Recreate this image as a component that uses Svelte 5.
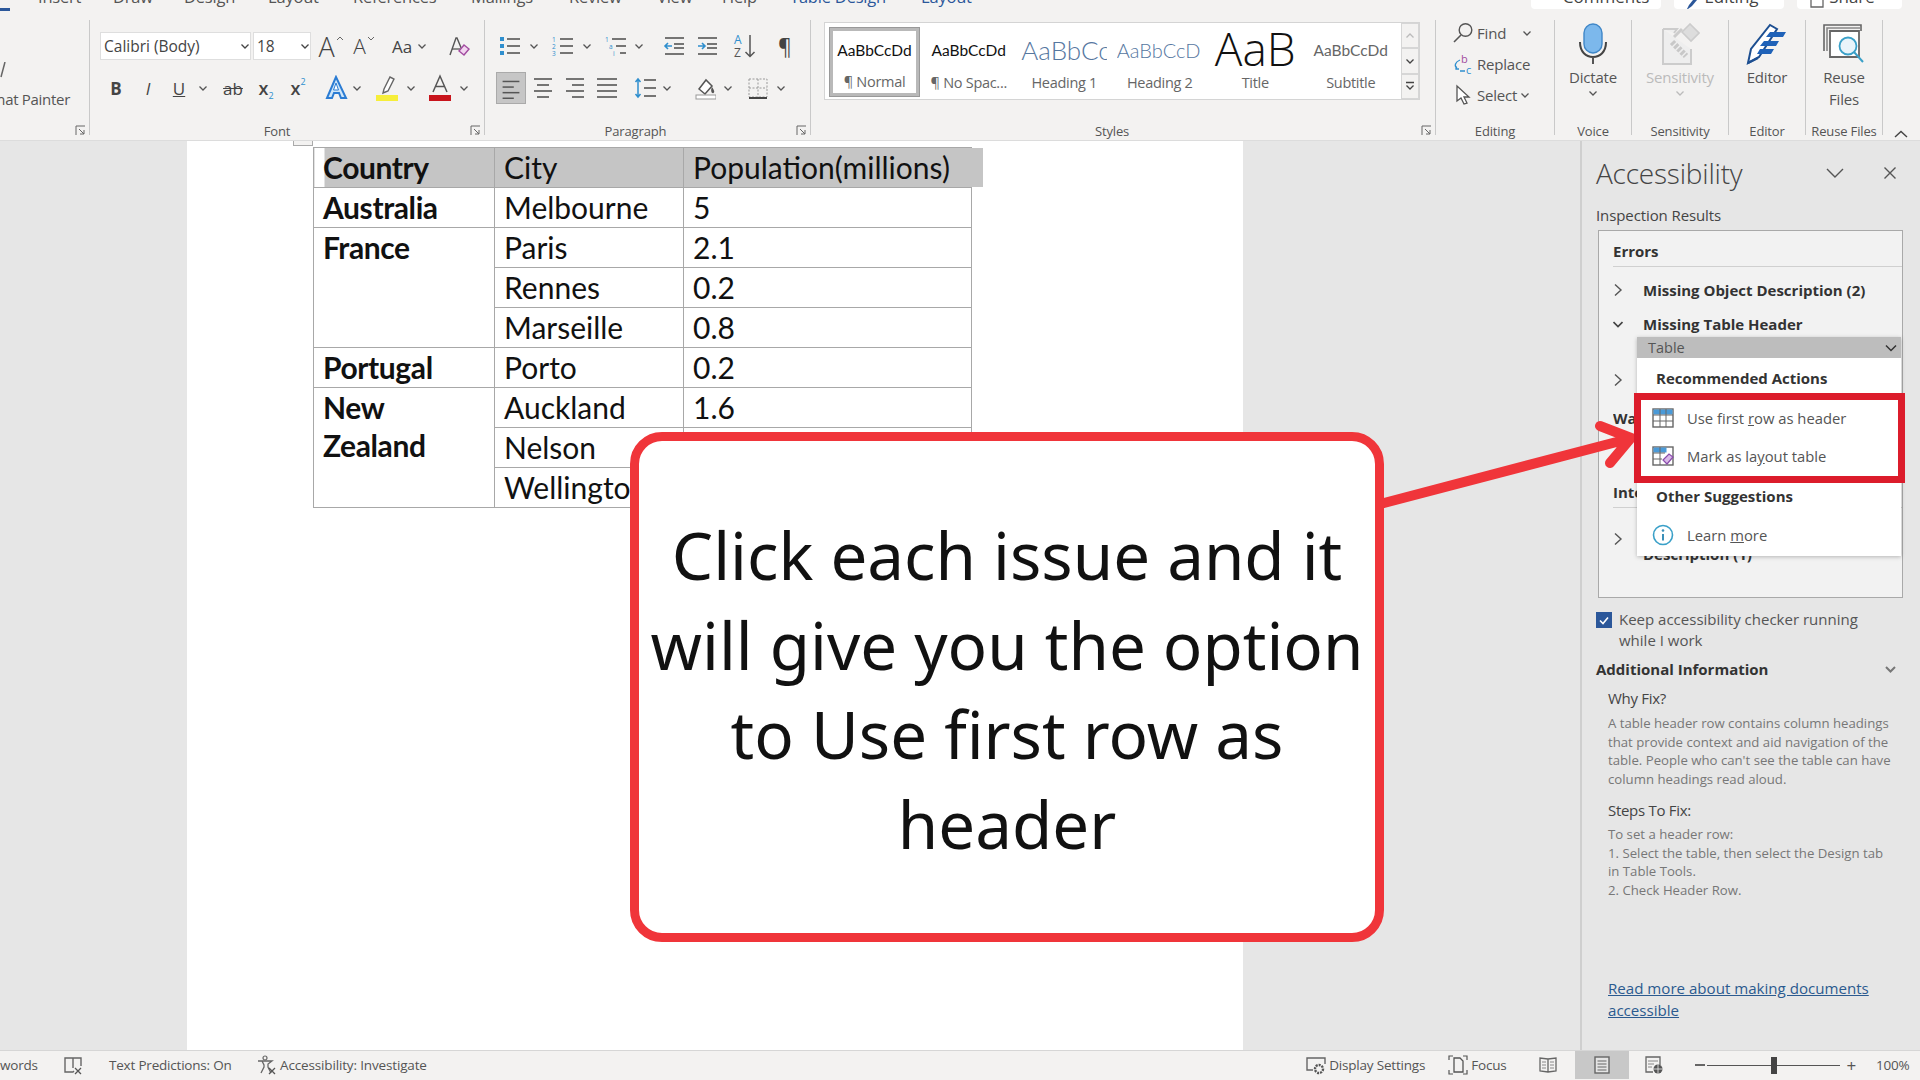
<script>
  const lines = (ys, x1, x2, c='#555', sw=1.6) => ys.map(y=>`<path d="M${x1} ${y}H${x2}" stroke="${c}" stroke-width="${sw}" fill="none"/>`).join('');
  const chev = {w:10,h:10,vb:'0 0 10 10',svg:'<path d="M1.5 3.5L5 7l3.5-3.5" fill="none" stroke="#555" stroke-width="1.3"/>'};
  const ch = c => ({...chev,c});
  const place = (items,start) => { let x=start; return items.map(it=>{ const w=it.w??22; const ml=it.c-w/2-x; x=it.c+w/2; return {...it,w,ml}; }); };

  const fontRow1 = place([
    {c:331,w:30,h:28,t:'A',cls:'big',car:'M1 4l3-3 3 3'},
    {c:364,w:28,h:28,t:'A',cls:'mid',car:'M1 1l3 3 3-3'},
    {c:402,w:24,h:28,t:'Aa',cls:'aa'},
    ch(422),
    {c:459,w:24,h:24,svg:'<path d="M3 21L9 4h1l5 12" fill="none" stroke="#555" stroke-width="1.4"/><path d="M5 15h8" stroke="#555" stroke-width="1.3"/><path d="M12 17l5-6 5 4-5 6z" fill="#f2d5f0" stroke="#a24ca0" stroke-width="1.4"/>'}
  ],311);

  const fontRow2 = place([
    {c:116,w:16,h:24,t:'B',cls:'b'},
    {c:148,w:14,h:24,t:'I',cls:'it'},
    {c:179,w:18,h:24,t:'U',cls:'u'},
    ch(203),
    {c:233,w:24,h:24,t:'ab',cls:'st'},
    {c:266,w:24,h:24,t:'x',cls:'sub',sb:'2'},
    {c:298,w:24,h:24,t:'x',cls:'sup',sp:'2'},
    {c:336,w:24,h:26,svg:'<path d="M12 2L3 23h5l2-5h5l2 5h5z" fill="#cfe6f8" stroke="#2b7cd3" stroke-width="2"/><path d="M12 8l-2.5 7h5z" fill="#fff" stroke="#2b7cd3" stroke-width="1"/>'},
    ch(357),
    {c:387,w:26,h:28,svg:'<path d="M10 15L16 3l4 2-6 12-5 2z" fill="#fff" stroke="#666" stroke-width="1.4"/><rect x="2" y="21" width="22" height="6" fill="#f6ee3a"/>'},
    ch(411),
    {c:440,w:26,h:28,svg:'<path d="M6 18L13 2l7 16M8.5 12.5h9" fill="none" stroke="#555" stroke-width="1.5"/><rect x="2" y="21" width="22" height="6" fill="#c8141c"/>'},
    ch(464)
  ],90);

  const L = (ys,x1=9,x2=22)=>lines(ys,x1,x2,'#555',1.6);
  const paraRow1 = place([
    {c:509,svg:'<rect x="2" y="3" width="4" height="4" fill="#2f8fce"/><rect x="2" y="10" width="4" height="4" fill="#2f8fce"/><rect x="2" y="17" width="4" height="4" fill="#2f8fce"/>'+L([5,12,19])},
    ch(534),
    {c:562,svg:'<text x="1" y="8" font-size="6.5" fill="#2f8fce" font-family="Open Sans">1</text><text x="1" y="15" font-size="6.5" fill="#2f8fce" font-family="Open Sans">2</text><text x="1" y="22" font-size="6.5" fill="#2f8fce" font-family="Open Sans">3</text>'+L([5,12,19])},
    ch(587),
    {c:615,svg:'<text x="1" y="8" font-size="6.5" fill="#2f8fce" font-family="Open Sans">1</text><text x="5" y="15" font-size="6.5" fill="#2f8fce" font-family="Open Sans">a</text><text x="9" y="22" font-size="6.5" fill="#2f8fce" font-family="Open Sans">i</text>'+lines([5],8,22,'#555',1.6)+lines([12],12,22,'#555',1.6)+lines([19],16,22,'#555',1.6)},
    ch(639),
    {c:673,svg:lines([4,20],3,22,'#555',1.6)+lines([10,14],12,22,'#555',1.6)+'<path d="M10 12H3M6 9l-3 3 3 3" fill="none" stroke="#2f8fce" stroke-width="1.6"/>'},
    {c:706,svg:lines([4,20],3,22,'#555',1.6)+lines([10,14],12,22,'#555',1.6)+'<path d="M3 12h7M7 9l3 3-3 3" fill="none" stroke="#2f8fce" stroke-width="1.6"/>'},
    {c:745,w:24,h:26,svg:'<text x="1" y="11" font-size="12" fill="#2f8fce" font-family="Open Sans">A</text><text x="1" y="24" font-size="12" fill="#555" font-family="Open Sans">Z</text><path d="M17 2v21M12.5 19l4.5 4.5 4.5-4.5" fill="none" stroke="#555" stroke-width="1.5"/>'},
    {c:785,w:18,h:24,t:'¶',cls:'pil'}
  ],485);
  const paraRow2 = place([
    {c:511,w:30,h:32,cls:'on',svg:lines([5,17],3,21)+lines([11,23],3,15),vb:'-3 -4 30 32'},
    {c:542,svg:lines([3,15],3,21)+lines([9,21],6,18)},
    {c:574,svg:lines([3,15],3,21)+lines([9,21],9,21)},
    {c:606,svg:lines([3,9,15,21],2,22)},
    {c:645,svg:lines([4,12,20],10,23)+'<path d="M4 3v18M1.5 6L4 3l2.5 3M1.5 18L4 21l2.5-3" fill="none" stroke="#2f8fce" stroke-width="1.5"/>'},
    ch(667),
    {c:705,svg:'<path d="M5 13l7-9 6 6-7 8z" fill="#fff" stroke="#555" stroke-width="1.5"/><path d="M18 11c2 3 3 5 1.5 6S16 15 18 11z" fill="#555"/><rect x="2" y="19" width="20" height="4" fill="#fff" stroke="#999"/>'},
    ch(728),
    {c:757,svg:'<path d="M3 3h18v18H3z" fill="none" stroke="#999" stroke-dasharray="2 1.5"/><path d="M12 3v18M3 12h18" fill="none" stroke="#999" stroke-dasharray="2 1.5"/><path d="M3 22h18" stroke="#444" stroke-width="2"/>'},
    ch(781)
  ],485);

  const styles = [
    {t:'AaBbCcDd',l:'¶ Normal',cls:'n',sel:true},
    {t:'AaBbCcDd',l:'¶ No Spac...',cls:'n'},
    {t:'AaBbCc',l:'Heading 1',cls:'h1'},
    {t:'AaBbCcD',l:'Heading 2',cls:'h2'},
    {t:'AaB',l:'Title',cls:'ti'},
    {t:'AaBbCcDd',l:'Subtitle',cls:'su'}
  ];
  const tabs = [['Insert',38],['Draw',113],['Design',184],['Layout',268],['References',353],['Mailings',471],['Review',569],['View',657],['Help',722],['Table Design',790,1],['Layout',921,1]];
</script>

<div class="app">
  <div class="tabs">
    <span class="home"></span>
    {#each tabs as t}
      <span class="tab" class:ctx={t[2]} style="margin-left:{t[1]}px">{t[0]}</span>
    {/each}
    <div class="tbtns">
      <span class="tbtn w130"><span class="tbl">Comments</span></span>
      <span class="tbtn w110"><svg width="14" height="9" viewBox="0 0 14 9"><path d="M2 9l2-4 4-5h4l-5 6-4 3z" fill="#2b579a"/></svg><span class="tbl">Editing</span></span>
      <span class="tbtn w105"><svg width="14" height="9" viewBox="0 0 14 9"><path d="M1 0v7h12V0" fill="none" stroke="#666" stroke-width="1.3"/></svg><span class="tbl">Share</span></span>
    </div>
  </div>

  <div class="ribbon">
    <div class="g clip">
      <svg class="brush" width="6" height="16" viewBox="0 0 6 16"><path d="M5 0L1 15" stroke="#666" stroke-width="1.5"/></svg>
      <div class="painter">Format Painter</div>
      <div class="lbl"></div>
      <span class="launch"><svg width="11" height="11" viewBox="0 0 11 11"><path d="M1 10V1h9M4 4l5 5M9 5v4H5" fill="none" stroke="#666"/></svg></span>
    </div>

    <div class="g font">
      <div class="rows">
        <div class="row r1">
          <div class="combo fam">Calibri (Body)<svg width="10" height="10" viewBox="0 0 10 10"><path d="M1.5 3.5L5 7l3.5-3.5" fill="none" stroke="#444" stroke-width="1.3"/></svg></div>
          <div class="combo size">18<svg width="10" height="10" viewBox="0 0 10 10"><path d="M1.5 3.5L5 7l3.5-3.5" fill="none" stroke="#444" stroke-width="1.3"/></svg></div>
          {#each fontRow1 as it}{@render slot(it)}{/each}
        </div>
        <div class="row r2">{#each fontRow2 as it}{@render slot(it)}{/each}</div>
      </div>
      <div class="lbl">Font</div>
      <span class="launch"><svg width="11" height="11" viewBox="0 0 11 11"><path d="M1 10V1h9M4 4l5 5M9 5v4H5" fill="none" stroke="#666"/></svg></span>
    </div>

    <div class="g para">
      <div class="rows">
        <div class="row r1">{#each paraRow1 as it}{@render slot(it)}{/each}</div>
        <div class="row r2">{#each paraRow2 as it}{@render slot(it)}{/each}</div>
      </div>
      <div class="lbl">Paragraph</div>
      <span class="launch"><svg width="11" height="11" viewBox="0 0 11 11"><path d="M1 10V1h9M4 4l5 5M9 5v4H5" fill="none" stroke="#666"/></svg></span>
    </div>

    <div class="g sty">
      <div class="gallery">
        <div class="items">
          {#each styles as st}
            <div class="st-item" class:sel={st.sel}>
              <div class="prev {st.cls}">{st.t}</div>
              <div class="stl">{st.l}</div>
            </div>
          {/each}
        </div>
        <div class="scroll">
          <span class="sb"><svg width="10" height="10" viewBox="0 0 10 10"><path d="M1.5 6.5L5 3l3.5 3.5" fill="none" stroke="#bbb" stroke-width="1.3"/></svg></span>
          <span class="sb"><svg width="10" height="10" viewBox="0 0 10 10"><path d="M1.5 3.5L5 7l3.5-3.5" fill="none" stroke="#444" stroke-width="1.3"/></svg></span>
          <span class="sb"><svg width="10" height="10" viewBox="0 0 10 10"><path d="M1 1.5h8M1.5 4.5L5 8l3.5-3.5" fill="none" stroke="#444" stroke-width="1.3"/></svg></span>
        </div>
      </div>
      <div class="lbl">Styles</div>
      <span class="launch"><svg width="11" height="11" viewBox="0 0 11 11"><path d="M1 10V1h9M4 4l5 5M9 5v4H5" fill="none" stroke="#666"/></svg></span>
    </div>

    <div class="g edit">
      <div class="elist">
        <div class="erow"><svg class="eic" width="22" height="22" viewBox="0 0 22 22"><circle cx="13.5" cy="8" r="6.3" fill="none" stroke="#555" stroke-width="1.4"/><path d="M9 13L2 20" stroke="#555" stroke-width="1.6"/></svg><span>Find</span><svg class="ech" width="10" height="10" viewBox="0 0 10 10"><path d="M1.5 3.5L5 7l3.5-3.5" fill="none" stroke="#555" stroke-width="1.3"/></svg></div>
        <div class="erow"><svg class="eic" width="22" height="22" viewBox="0 0 22 22"><text x="9" y="10" font-size="11" fill="#a24ca0" font-family="Open Sans">b</text><text x="14" y="21" font-size="11" fill="#2f8fce" font-family="Open Sans">c</text><path d="M8 7C3 9 2 13 5 15M4 13v3h3M8 18h5" fill="none" stroke="#2f8fce" stroke-width="1.3"/></svg><span>Replace</span></div>
        <div class="erow"><svg class="eic" width="22" height="22" viewBox="0 0 22 22"><path d="M5 2v15l4-3 3 6 3-1-3-6h5z" fill="#fff" stroke="#555" stroke-width="1.3"/></svg><span>Select</span><svg class="ech sel" width="10" height="10" viewBox="0 0 10 10"><path d="M1.5 3.5L5 7l3.5-3.5" fill="none" stroke="#555" stroke-width="1.3"/></svg></div>
      </div>
      <div class="lbl">Editing</div>
    </div>

    <div class="g voice">
      <div class="bigbtn">
        <svg width="30" height="42" viewBox="0 0 30 42"><rect x="6" y="1" width="18" height="29" rx="9" fill="#7cb8ec" stroke="#3f87c8" stroke-width="1.4"/><path d="M2 19c0 10 6 15 13 15s13-5 13-15" fill="none" stroke="#444" stroke-width="2"/><path d="M15 34v7" stroke="#555" stroke-width="2"/></svg>
        <div class="bt">Dictate</div>
        <svg class="bch" width="10" height="10" viewBox="0 0 10 10"><path d="M1.5 3.5L5 7l3.5-3.5" fill="none" stroke="#555" stroke-width="1.3"/></svg>
      </div>
      <div class="lbl">Voice</div>
    </div>

    <div class="g sens">
      <div class="bigbtn dim">
        <svg width="40" height="42" viewBox="0 0 40 42"><path d="M3 6h14l-3 4M31 26v15H3V6" fill="#eee" stroke="#ccc" stroke-width="2"/><path d="M12 19l14 14" stroke="#c8c8c8" stroke-width="6" stroke-dasharray="3 1.5"/><path d="M22 9l8-8 9 9-8 8z" fill="#ddd" stroke="#ccc" stroke-width="1.6"/><path d="M14 14l8-8" stroke="#ccc" stroke-width="3"/></svg>
        <div class="bt">Sensitivity</div>
        <svg class="bch" width="10" height="10" viewBox="0 0 10 10"><path d="M1.5 3.5L5 7l3.5-3.5" fill="none" stroke="#bbb" stroke-width="1.3"/></svg>
      </div>
      <div class="lbl">Sensitivity</div>
    </div>

    <div class="g ed">
      <div class="bigbtn">
        <svg width="42" height="42" viewBox="0 0 42 42"><path d="M2 40l3-14L24 2l7 4L13 34z" fill="#fff" stroke="#1d4f91" stroke-width="2"/><path d="M24 9h16l-3 5H20zM18 18h15l-3 5H14zM11 31h14l3-5H14z" fill="#1f62b8"/><path d="M2 40l10-5" stroke="#1d4f91" stroke-width="2"/></svg>
        <div class="bt">Editor</div>
      </div>
      <div class="lbl">Editor</div>
    </div>

    <div class="g reuse">
      <div class="bigbtn">
        <svg width="42" height="42" viewBox="0 0 42 42"><path d="M1 28V2h37v6" fill="none" stroke="#666" stroke-width="1.6"/><path d="M4 28V5h34" fill="none" stroke="#888" stroke-width="1.6"/><path d="M7 8h29v26H7z" fill="#fff" stroke="#666" stroke-width="1.8"/><circle cx="25" cy="23" r="8.5" fill="#e9f4fa" stroke="#3aa0c8" stroke-width="1.8"/><path d="M31 29l9 10" stroke="#3aa0c8" stroke-width="2"/></svg>
        <div class="bt">Reuse<br>Files</div>
      </div>
      <div class="lbl">Reuse Files</div>
    </div>

    <div class="collapse"><svg width="14" height="9" viewBox="0 0 14 9"><path d="M1 7l6-5.5L13 7" fill="none" stroke="#444" stroke-width="1.4"/></svg></div>
  </div>

  <div class="work">
    <div class="canvas">
      <div class="page">
        <span class="handle"></span>
        <table>
          <colgroup><col class="c1"><col class="c2"><col class="c3"></colgroup>
          <tbody>
            <tr class="hd"><th>Country</th><td>City</td><td>Population(millions)</td></tr>
            <tr><th>Australia</th><td>Melbourne</td><td>5</td></tr>
            <tr><th rowspan="3">France</th><td>Paris</td><td>2.1</td></tr>
            <tr><td>Rennes</td><td>0.2</td></tr>
            <tr><td>Marseille</td><td>0.8</td></tr>
            <tr><th>Portugal</th><td>Porto</td><td>0.2</td></tr>
            <tr><th rowspan="3" class="nz">New<br>Zealand</th><td>Auckland</td><td>1.6</td></tr>
            <tr><td>Nelson</td><td>0.1</td></tr>
            <tr><td>Wellington</td><td>0.2</td></tr>
          </tbody>
        </table>
        <span class="rowext"></span>
      </div>
    </div>

    <aside class="pane">
      <div class="phead">
        <span class="ptitle">Accessibility</span>
        <svg class="pch" width="20" height="12" viewBox="0 0 20 12"><path d="M2 2l8 8 8-8" fill="none" stroke="#555" stroke-width="1.4"/></svg>
        <svg class="px" width="14" height="14" viewBox="0 0 14 14"><path d="M1.5 1.5l11 11M12.5 1.5l-11 11" fill="none" stroke="#555" stroke-width="1.4"/></svg>
      </div>
      <div class="insp">Inspection Results</div>
      <div class="box">
        <div class="sec first">Errors</div>
        <div class="rule"></div>
        <div class="item a1">{@render gt()}<span>Missing Object Description (2)</span></div>
        <div class="item">{@render dn()}<span>Missing Table Header</span></div>
        <div class="item a2">{@render gt()}<span>Hidden</span></div>
        <div class="sec wa">Warnings</div>
        <div class="sec intl">Intelligent Services</div>
        <div class="rule"></div>
        <div class="item two a3">{@render gt()}<span>Missing Alternative Text<br>Description (1)</span></div>

        <div class="fly">
          <div class="tbar"><span>Table</span><svg width="12" height="8" viewBox="0 0 12 8"><path d="M1 1.5l5 5 5-5" fill="none" stroke="#333" stroke-width="1.5"/></svg></div>
          <div class="fh rec">Recommended Actions</div>
          <div class="fr"><svg width="22" height="20" viewBox="0 0 22 20"><rect x="1" y="1" width="20" height="18" fill="#fff" stroke="#666" stroke-width="1.4"/><rect x="1.5" y="1.5" width="19" height="5" fill="#4a9ad8"/><path d="M1 7h20M1 13h20M8 1v18M14 1v18" stroke="#666"/></svg><span>Use first <u>r</u>ow as header</span></div>
          <div class="fr"><svg width="22" height="20" viewBox="0 0 22 20"><rect x="1" y="1" width="20" height="18" fill="#fff" stroke="#666" stroke-width="1.4"/><rect x="1.5" y="1.5" width="13" height="5" fill="#4a9ad8"/><path d="M1 7h12M1 13h9M8 1v18" stroke="#666"/><path d="M11 14l6-6 4 3-6 7z" fill="#d9b8e8" stroke="#8a4cab" stroke-width="1.2"/></svg><span>Mark as la<u>y</u>out table</span></div>
          <div class="fh oth">Other Suggestions</div>
          <div class="fr lm"><svg width="22" height="22" viewBox="0 0 22 22"><circle cx="11" cy="11" r="9.5" fill="#fff" stroke="#3aa0c8" stroke-width="1.6"/><circle cx="11" cy="6.5" r="1.3" fill="#3a8fb8"/><path d="M11 10v6.5" stroke="#3a8fb8" stroke-width="2"/></svg><span>Learn <u>m</u>ore</span></div>
        </div>
      </div>

      <div class="chk">
        <span class="cb"><svg width="12" height="12" viewBox="0 0 12 12"><path d="M2 6.5l3 3 5-6" fill="none" stroke="#fff" stroke-width="1.6"/></svg></span>
        <span>Keep accessibility checker running<br>while I work</span>
      </div>
      <div class="addl"><span>Additional Information</span><svg width="11" height="7" viewBox="0 0 11 7"><path d="M1 1l4.5 4.5L10 1" fill="none" stroke="#777" stroke-width="2"/></svg></div>
      <div class="subh why">Why Fix?</div>
      <p class="txt t1">A table header row contains column headings<br>that provide context and aid navigation of the<br>table. People who can't see the table can have<br>column headings read aloud.</p>
      <div class="subh steps">Steps To Fix:</div>
      <p class="txt t2">To set a header row:<br>1. Select the table, then select the Design tab<br>in Table Tools.<br>2. Check Header Row.</p>
      <a class="more" href="#top">Read more about making documents<br>accessible</a>
    </aside>
  </div>

  <footer class="status">
    <span class="words">words</span>
    <svg class="bk" width="20" height="20" viewBox="0 0 20 20"><path d="M10 3v10M10 3H2v14h8l1-1M10 3h8v8" fill="none" stroke="#666" stroke-width="1.4"/><path d="M12 13l6 6M18 13l-6 6" stroke="#555" stroke-width="1.3"/></svg>
    <span class="tp">Text Predictions: On</span>
    <svg class="ac" width="20" height="20" viewBox="0 0 20 20"><circle cx="8" cy="3" r="2" fill="none" stroke="#666" stroke-width="1.2"/><path d="M1 6h14l-4 3v3l3 6M5 6l2 4v2l-3 6" fill="none" stroke="#666" stroke-width="1.3"/><path d="M12 13l6 6M18 13l-6 6" stroke="#555" stroke-width="1.3"/></svg>
    <span class="acct">Accessibility: Investigate</span>
    <span class="sp"></span>
    <svg class="ds" width="20" height="20" viewBox="0 0 20 20"><path d="M7 15H1V3h18v6" fill="none" stroke="#666" stroke-width="1.4"/><circle cx="13" cy="14" r="4" fill="none" stroke="#555" stroke-width="2.4" stroke-dasharray="2 1"/></svg>
    <span class="dst">Display Settings</span>
    <svg class="fo" width="20" height="20" viewBox="0 0 20 20"><path d="M1 5V1h4M15 1h4v4M19 15v4h-4M5 19H1v-4" fill="none" stroke="#555" stroke-width="1.2"/><path d="M6 3h6l3 3v11H6z" fill="none" stroke="#555" stroke-width="1.3"/></svg>
    <span class="fot">Focus</span>
    <svg class="rd" width="18" height="18" viewBox="0 0 18 18"><path d="M9 3L1 2v13l8 1 8-1V2zM9 3v13" fill="none" stroke="#666" stroke-width="1.3"/><path d="M3 6h4M3 9h4M3 12h4M11 6h4M11 9h4M11 12h4" stroke="#888"/></svg>
    <span class="pr"><svg width="16" height="18" viewBox="0 0 16 18"><rect x="1" y="1" width="14" height="16" fill="#e4e4e4" stroke="#666" stroke-width="1.4"/><path d="M3.5 5h9M3.5 8h9M3.5 11h9M3.5 14h9" stroke="#666"/></svg></span>
    <svg class="wb" width="18" height="18" viewBox="0 0 18 18"><path d="M8 16H1V1h14v8" fill="none" stroke="#666" stroke-width="1.3"/><path d="M3 5h10M3 8h6M3 11h4" stroke="#888"/><circle cx="13" cy="13" r="4.5" fill="#555"/><path d="M8.5 13h9M13 8.5v9" stroke="#eee" stroke-width=".8"/></svg>
    <span class="minus"></span>
    <span class="slider"><span class="thumb"></span></span>
    <span class="zp">+</span>
    <span class="pct">100%</span>
  </footer>

  <div class="callout">
    <p>Click each issue and it<br>will give you the option<br>to Use first row as<br>header</p>
  </div>
  <svg class="arrow" width="270" height="100" viewBox="1380 420 270 100">
    <path d="M1384 503L1628 439M1600 426L1631 438L1610 463" fill="none" stroke="#f0353a" stroke-width="10" stroke-linecap="round" stroke-linejoin="miter"/>
  </svg>
  <div class="redbox"></div>
</div>

{#snippet slot(it)}
  <span class="slot {it.cls ?? ''}" style="width:{it.w}px;height:{it.h ?? 24}px;margin-left:{it.ml}px">
    {#if it.t}
      {it.t}{#if it.sb}<sub>{it.sb}</sub>{/if}{#if it.sp}<sup>{it.sp}</sup>{/if}{#if it.car}<svg class="car" width="8" height="5" viewBox="0 0 8 5"><path d={it.car} fill="none" stroke="#666" stroke-width="1"/></svg>{/if}
    {:else}
      <svg width={it.w} height={it.h ?? 24} viewBox={it.vb ?? `0 0 ${it.w} ${it.h ?? 24}`}>{@html it.svg}</svg>
    {/if}
  </span>
{/snippet}
{#snippet gt()}<svg class="tw" width="10" height="14" viewBox="0 0 10 14"><path d="M2 1.5L8 7l-6 5.5" fill="none" stroke="#555" stroke-width="1.4"/></svg>{/snippet}
{#snippet dn()}<svg class="tw" width="10" height="14" viewBox="0 0 10 14"><path d="M0.5 5L5 9.5 9.5 5" fill="none" stroke="#444" stroke-width="1.7"/></svg>{/snippet}

<style>
  :global(body){margin:0;background:#e6e6e6;}
  .app{position:relative;width:1920px;height:1080px;overflow:hidden;display:flex;flex-direction:column;background:#e6e6e6;font-family:"Open Sans","Noto Sans",sans-serif;color:#444;}

  .tabs{position:relative;height:20px;background:#f3f2f1;display:flex;flex:none;}
  .tab{position:absolute;top:-13px;left:0;font-size:16.5px;line-height:20px;color:#555;white-space:nowrap;letter-spacing:-.2px;}
  .tab.ctx{color:#2b579a;}
  .home{position:absolute;left:0;top:8px;width:10px;height:3px;background:#2b579a;}
  .tbtns{position:absolute;left:1531px;top:0;display:flex;gap:13px;}
  .tbtn{height:9px;background:#fff;border-radius:0 0 4px 4px;font-size:17px;line-height:0;color:#444;overflow:hidden;display:flex;justify-content:center;align-items:flex-start;gap:11px;box-sizing:border-box;padding-left:20px;}
  .tbtn svg{margin-left:-14px;flex:none;}
  .tbl{display:block;margin-top:-3px;line-height:0;height:0;}
  .w130{width:130px;}.w110{width:110px;padding-left:0;gap:5px;}.w105{width:105px;padding-left:0;gap:5px;}

  .ribbon{height:121px;flex:none;display:flex;background:#f3f2f1;border-bottom:1px solid #dcdcdc;box-sizing:border-box;position:relative;}
  .g{position:relative;height:115px;box-sizing:border-box;border-right:1px solid #c9c9c9;display:flex;flex-direction:column;flex:none;}
  .clip{width:90px;}.font{width:395px;}.para{width:326px;}.sty{width:625px;}.edit{width:119px;}
  .voice{width:77px;}.sens{width:97px;}.reuse{width:77px;}.ed{width:77px;}
  .lbl{margin-top:auto;margin-bottom:-7px;height:22px;line-height:22px;text-align:center;font-size:13px;color:#555;letter-spacing:-.15px;white-space:nowrap;}
  .font .lbl{padding-right:20px;}
  .para .lbl{padding-right:24px;}
  .sty .lbl{padding-right:35px;}
  .launch{position:absolute;right:3px;bottom:-1px;width:11px;height:11px;display:flex;}
  .painter{position:absolute;right:19px;top:69px;font-size:15px;line-height:20px;white-space:nowrap;color:#555;letter-spacing:-.3px;}
  .brush{position:absolute;left:0;top:42px;}

  .rows{padding-top:12px;display:flex;flex-direction:column;}
  .row{display:flex;align-items:center;height:28px;}
  .r2{margin-top:12px;height:32px;}
  .font .r1{padding-left:10px;}
  .combo{height:28px;box-sizing:border-box;background:#fff;border:1px solid #dedede;font-size:15.5px;line-height:26px;padding-left:3px;display:flex;align-items:center;justify-content:space-between;padding-right:0;color:#444;flex:none;}
  .fam{width:151px;}.size{width:58px;margin-left:2px;}
  .slot{display:flex;align-items:center;justify-content:center;flex:none;color:#444;font-size:15px;position:relative;box-sizing:border-box;}
  .slot svg{display:block;}
  .slot .car{align-self:flex-start;margin:4px 0 0 1px;}
  .slot.big{font-size:27px;font-weight:300;}
  .slot.mid{font-size:21px;font-weight:300;}
  .slot.aa{font-size:17px;}
  .slot.b{font-weight:700;font-size:17px;}
  .slot.it{font-style:italic;font-size:17px;}
  .slot.u{text-decoration:underline;font-size:17px;}
  .slot.st{text-decoration:line-through;font-size:17px;}
  .slot.sub,.slot.sup{font-size:18px;font-weight:600;}
  .slot sub,.slot sup{font-size:9px;color:#2f8fce;line-height:1;font-weight:400;}
  .slot sub{margin-top:14px;}
  .slot sup{margin-top:-14px;}
  .slot.pil{font-size:21px;}
  .slot.on{background:#c6c6c6;border:1px solid #aaa;}

  .sty{padding:2px 0 0 13px;}
  .gallery{width:596px;height:78px;box-sizing:border-box;display:flex;background:#fff;border:1px solid #d4d4d4;}
  .items{display:flex;padding:4px 0 0 4px;flex:1;min-width:0;}
  .st-item{width:95.5px;height:70px;box-sizing:border-box;text-align:center;overflow:hidden;flex:none;display:flex;flex-direction:column;align-items:center;}
  .st-item.sel{border:4px solid #b9b9b9;outline:1px solid #999;outline-offset:-1px;width:91px;margin-right:1px;}
  .prev{height:45px;line-height:46px;width:86px;overflow:hidden;white-space:nowrap;font-family:Lato,"Open Sans",sans-serif;color:#111;font-size:15.5px;text-align:center;}
  .sel .prev{margin-top:-4px;width:80px;}
  .prev.h1{font-size:26px;color:#56779f;text-align:left;font-weight:300;}
  .prev.h2{font-size:20px;color:#56779f;text-align:left;font-weight:300;}
  .prev.ti{font-size:46px;line-height:34px;height:37px;margin-top:4px;margin-bottom:4px;font-family:"Open Sans";font-weight:300;color:#111;}
  .prev.su{color:#666;font-size:15.5px;}
  .stl{font-size:14.5px;color:#666;line-height:22px;white-space:nowrap;letter-spacing:-.3px;}
  .scroll{width:18px;flex:none;display:flex;flex-direction:column;}
  .sb{flex:1;display:flex;align-items:center;justify-content:center;background:#f3f2f1;border:1px solid #d6d6d6;box-sizing:border-box;}

  .elist{margin-top:-3px;padding-left:16px;display:flex;flex-direction:column;}
  .erow{height:31px;display:flex;align-items:center;font-size:15px;color:#555;letter-spacing:-.2px;flex:none;}
  .eic{margin-right:3px;flex:none;}
  .ech{margin-left:16px;}.ech.sel{margin-left:3px;}

  .bigbtn{display:flex;flex-direction:column;align-items:center;padding-top:3px;height:90px;flex:none;box-sizing:border-box;}
  .bigbtn svg:first-child{height:42px;flex:none;}
  .bt{font-size:15px;line-height:22px;margin-top:1px;color:#555;letter-spacing:-.2px;text-align:center;}
  .dim .bt{color:#bbb;}
  .collapse{position:absolute;left:1894px;top:110px;display:flex;}

  .work{flex:1;min-height:0;display:flex;}
  .canvas{flex:1;min-width:0;padding-left:187px;}
  .page{position:relative;width:1056px;height:100%;background:#fff;padding:6px 0 0 126px;box-sizing:border-box;}
  .handle{position:absolute;left:106px;top:0;width:20px;height:5px;border:1px solid #aaa;border-top:0;box-sizing:border-box;background:#f3f2f1;}
  .rowext{position:absolute;left:784px;top:7px;width:12px;height:39px;background:#c5c5c5;}
  table{border-collapse:collapse;table-layout:fixed;width:658px;font-family:Lato,"Noto Sans",sans-serif;color:#111;font-size:30px;}
  .c1{width:181px;}.c2{width:189px;}.c3{width:288px;}
  td,th{border:1px solid #a8a8a8;height:40px;padding:0 0 1px 9px;text-align:left;vertical-align:middle;line-height:38px;font-weight:400;box-sizing:border-box;white-space:nowrap;overflow:hidden;}
  th{font-weight:700;vertical-align:top;letter-spacing:-.4px;padding-bottom:0;}
  tr.hd td{background:#c5c5c5;}
  tr.hd th{background:linear-gradient(to right,#fff 10px,#c5c5c5 10px);}

  .pane{width:340px;flex:none;box-sizing:border-box;border-left:2px solid #cfcfcf;display:flex;flex-direction:column;padding-left:14px;font-size:14px;}
  .phead{height:64px;flex:none;display:flex;align-items:center;position:relative;}
  .ptitle{font-size:28px;color:#444;font-weight:300;letter-spacing:-.2px;}
  .pch{margin-left:auto;margin-right:38px;}
  .px{margin-right:23px;}
  .insp{height:20px;line-height:20px;font-size:15px;color:#444;letter-spacing:-.1px;}
  .box{position:relative;margin:5px 0 0 2px;width:305px;height:368px;box-sizing:border-box;background:#f2f2f2;border:1px solid #a9a9a9;flex:none;}
  .sec{height:22px;line-height:22px;margin-left:14px;font-weight:700;font-size:15px;color:#333;white-space:nowrap;overflow:hidden;}
  .sec.first{margin-top:9px;}
  .sec.wa{margin-top:10px;}
  .sec.intl{margin-top:52px;}
  .rule{height:1px;background:#d0d0d0;margin:4px 0 0 14px;}
  .item{height:34px;display:flex;align-items:center;font-weight:700;font-size:15px;color:#333;margin-left:14px;white-space:nowrap;}
  .item.a1{margin-top:6px;}
  .item.a2{margin-top:22px;}
  .item.a3{margin-top:19px;height:44px;align-items:flex-start;line-height:18px;}
  .item.a3 .tw{margin-top:5px;}
  .tw{width:10px;flex:none;margin-right:20px;}
  .fly{position:absolute;left:38px;top:106px;width:264px;height:219px;background:#fff;box-shadow:0 1px 4px rgba(0,0,0,.25);display:flex;flex-direction:column;color:#555;}
  .tbar{height:21px;flex:none;background:#bdbdbd;display:flex;align-items:center;justify-content:space-between;padding:0 4px 0 11px;font-size:14.5px;color:#555;}
  .fh{height:24px;line-height:23px;padding-left:19px;font-weight:700;font-size:15px;color:#333;}
  .rec{margin-top:9px;margin-bottom:8px;}
  .oth{margin-top:10px;}
  .fr{height:38px;display:flex;align-items:center;padding-left:15px;font-size:14.8px;color:#555;}
  .fr svg{margin-right:13px;flex:none;}
  .lm{margin-top:7px;}
  .chk{display:flex;margin-top:11px;line-height:21px;font-size:15px;color:#555;}
  .cb{width:16px;height:16px;margin:3px 7px 0 0;background:#2b579a;display:flex;align-items:center;justify-content:center;flex:none;}
  .addl{display:flex;justify-content:space-between;align-items:center;margin-top:7px;height:22px;font-weight:700;font-size:15px;color:#333;padding-right:24px;}
  .subh{height:22px;line-height:22px;margin-left:12px;font-size:15px;color:#444;letter-spacing:-.3px;}
  .why{margin-top:7px;}
  .steps{margin-top:11px;}
  .txt{margin:0 0 0 12px;font-size:13.2px;line-height:18.5px;color:#777;white-space:nowrap;}
  .t1{margin-top:5px;}.t2{margin-top:4px;}
  .more{margin:78px 0 0 12px;font-size:15.1px;line-height:22px;color:#2b5a8f;}

  .status{height:30px;flex:none;box-sizing:border-box;border-top:1px solid #d6d6d6;background:#f3f2f1;display:flex;align-items:center;font-size:13.5px;color:#555;letter-spacing:-.2px;white-space:nowrap;padding-bottom:1px;}
  .status>*{flex:none;}
  .words{width:63px;}
  .bk{margin-right:26px;}
  .tp{width:147px;}
  .ac{margin-right:3px;margin-left:1px;}
  .acct{letter-spacing:-.15px;}
  .sp{flex:1 1 0;}
  .ds{margin-right:3px;}
  .dst{margin-right:23px;}
  .fo{margin-right:3px;}
  .fot{margin-right:33px;}
  .rd{margin-right:18px;}
  .pr{width:54px;height:28px;background:#c8c8c8;display:flex;align-items:center;justify-content:center;margin-right:16px;}
  .wb{margin-right:32px;}
  .minus{width:10px;height:2px;background:#666;}
  .slider{position:relative;width:133px;height:1px;background:#555;margin-left:2px;}
  .thumb{position:absolute;left:64px;top:-8px;width:6px;height:17px;background:#444;}
  .zp{margin-left:6px;font-size:17px;}
  .pct{margin-left:20px;width:44px;}

  .callout{position:absolute;left:630px;top:432px;width:754px;height:510px;box-sizing:border-box;background:#fff;border:9px solid #f0353a;border-radius:32px;display:flex;align-items:flex-start;justify-content:center;}
  .callout p{margin:69px 0 0;font-size:65.5px;line-height:89.5px;text-align:center;color:#111;font-family:"Noto Sans","Open Sans",sans-serif;white-space:nowrap;}
  .arrow{position:absolute;left:1380px;top:420px;}
  .redbox{position:absolute;left:1634px;top:393px;width:271px;height:90px;box-sizing:border-box;border:7px solid #dc1c2b;}
</style>
